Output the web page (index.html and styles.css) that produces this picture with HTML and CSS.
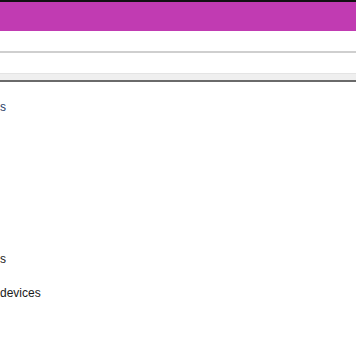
FILE: index.html
```html
<!DOCTYPE html>
<html lang="en">
<head>
    <meta charset="UTF-8">
    <title>Devices</title>
    <meta name="viewport" content="width=device-width, initial-scale=1.0">
    <link rel="stylesheet" href="styles.css">
</head>
<body>
    <div class="titlebar"></div>
    <div class="toolbar"></div>
    <div class="addressbar"></div>
    <div class="tabstrip"></div>
    <div class="content">
        <div class="item first">s</div>
        <div class="item second">s</div>
        <div class="item third">devices</div>
    </div>
</body>
</html>
```

FILE: styles.css
```css
body { margin: 0; background: #fff; font-family: "Liberation Sans", Arial, sans-serif; font-size: 12px; color: #1a1a1a; overflow: hidden; }
.titlebar { height: 29px; background: #c13bb2; border-top: 2px solid #111; }
.toolbar { height: 20px; background: #fff; border-bottom: 2px solid #cfcfcf; }
.addressbar { height: 20px; background: #fff; }
.tabstrip { height: 6px; background: #efefef; border-top: 1px solid #e4e4e4; border-bottom: 2px solid #6a6a6a; }
.content { display: flex; flex-direction: column; }
.item { line-height: 14px; }
.first { margin-top: 18px; color: #1f3c66; }
.second { margin-top: 138px; }
.third { margin-top: 20px; }
```
